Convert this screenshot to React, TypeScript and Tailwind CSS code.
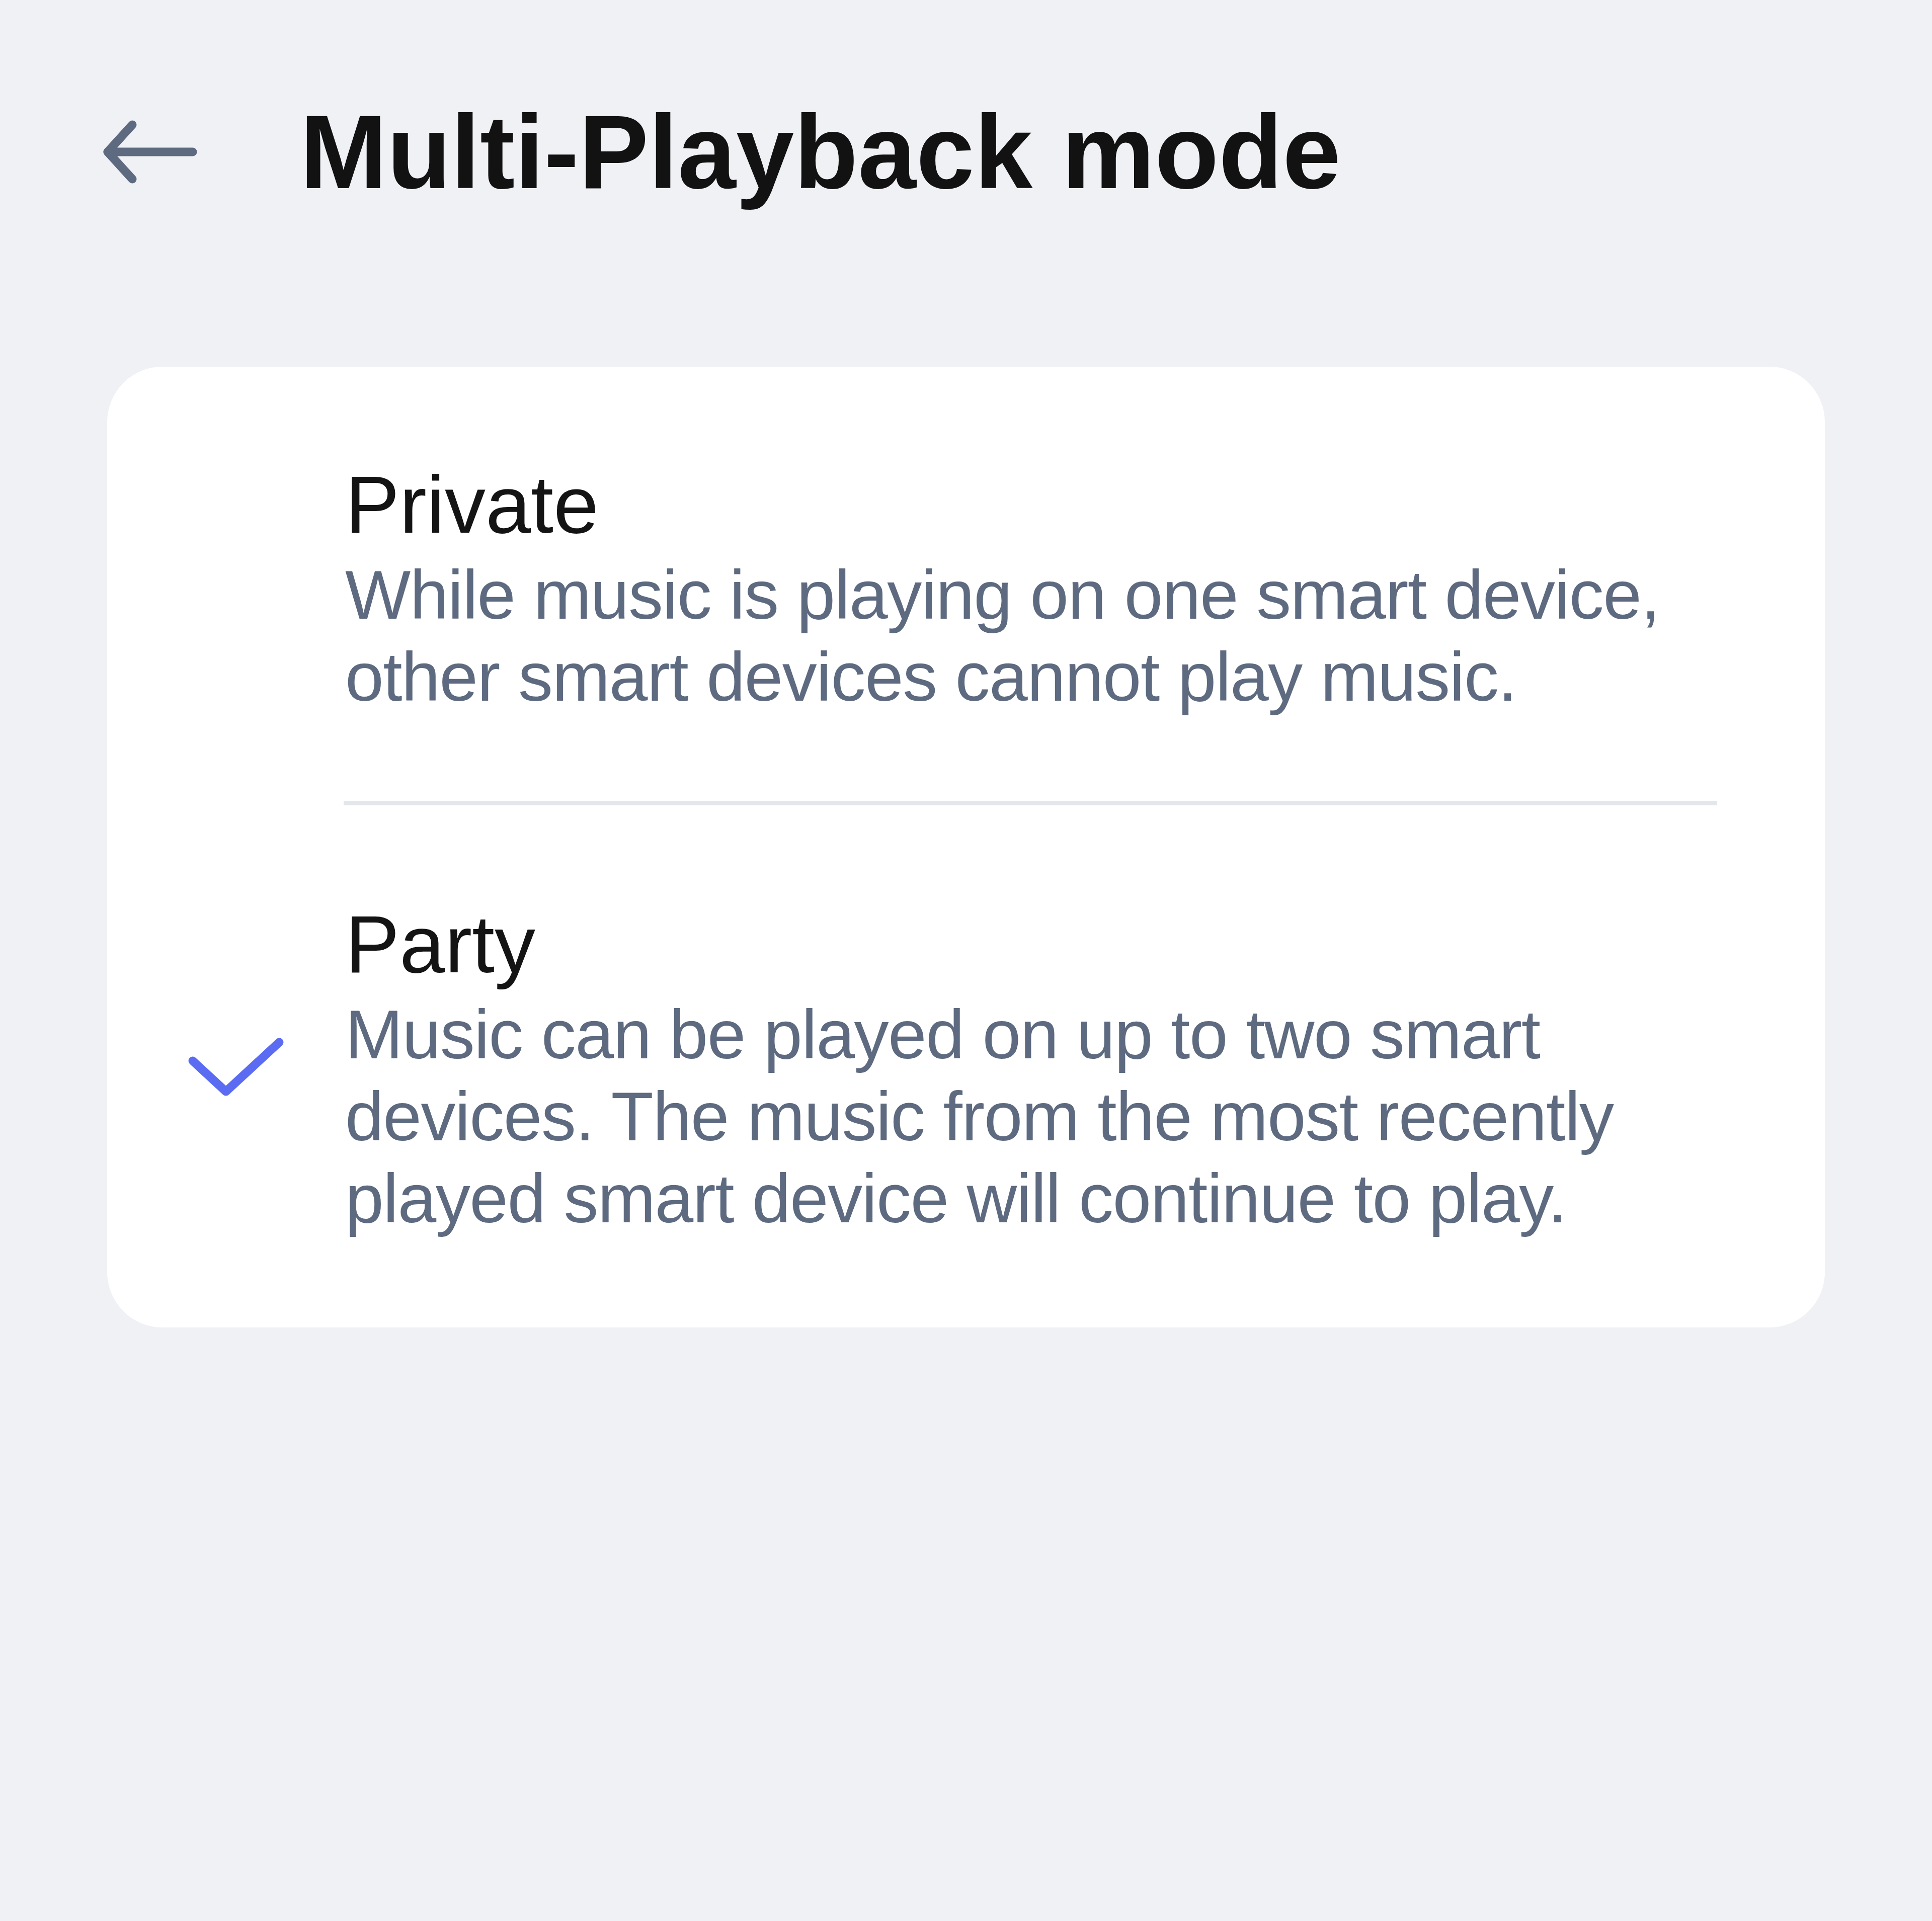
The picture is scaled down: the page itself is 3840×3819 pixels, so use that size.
const options = [
  {
    title: "Private",
    desc: "While music is playing on one smart device, other smart devices cannot play music.",
    selected: false,
  },
  {
    title: "Party",
    desc: "Music can be played on up to two smart devices. The music from the most recently played smart device will continue to play.",
    selected: true,
  },
]

function BackArrow() {
  return (
    <svg width="200" height="130" viewBox="0 0 200 130" fill="none" stroke="#5d6a80" strokeWidth="17" strokeLinecap="round" strokeLinejoin="round">
      <path d="M63 11 L14 65 L63 119" />
      <path d="M14 65 H183" />
    </svg>
  )
}

function Check() {
  return (
    <svg width="200" height="130" viewBox="0 0 200 130" fill="none" stroke="#5b6cf2" strokeWidth="17" strokeLinecap="round" strokeLinejoin="round">
      <path d="M10 52 L76 113 L182 15" />
    </svg>
  )
}

export default function App() {
  return (
    <div className="min-h-screen w-full bg-[#eff1f5] pt-[190px] font-['Liberation_Sans',Arial,sans-serif]">
      {/* header */}
      <div className="flex items-center h-[224px] pl-[200px]">
        <button className="shrink-0">
          <BackArrow />
        </button>
        <h1 className="ml-[196px] text-[208px] leading-[224px] font-bold text-[#121212]">
          Multi-Playback mode
        </h1>
      </div>

      {/* options card */}
      <div className="mx-[213px] mt-[315px] bg-white rounded-[110px] pr-[214px]">
        {options.map((opt, i) => (
          <div key={opt.title}>
            {i > 0 && <div className="ml-[470px] h-[9px] bg-[#e3e6ea]" />}
            <div className={`flex items-center ${i === 0 ? "pt-[176px] pb-[165px]" : "pt-[178px] pb-[175px]"}`}>
              <div className="w-[473px] shrink-0 pl-[160px]">
                {opt.selected && <Check />}
              </div>
              <div className="flex-1">
                <div className="text-[162px] leading-[196px] text-[#141414]">{opt.title}</div>
                <p className="text-[138px] leading-[163px] tracking-[-1.5px] text-[#5d6a80]">{opt.desc}</p>
              </div>
            </div>
          </div>
        ))}
      </div>
    </div>
  )
}
